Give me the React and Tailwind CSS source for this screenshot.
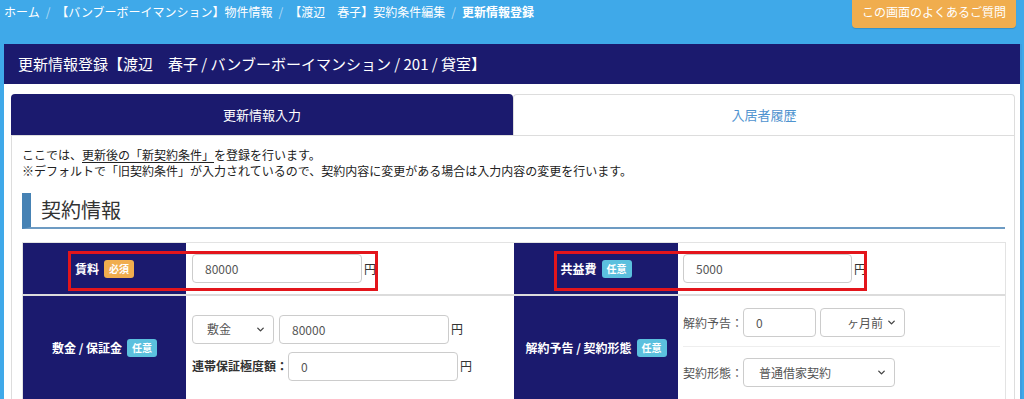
import React from 'react'
import { ChevronDown } from 'lucide-react'

const jp = { fontFamily: '"Noto Sans CJK JP", "Noto Sans", sans-serif' }

// ─── small parts ─────────────────────────────────────────────────────────────
function Badge({ kind }) {
  const req = kind === 'req'
  return (
    <span
      className={`ml-[5px] inline-flex items-center h-[18px] px-[5px] rounded-[3px] text-[10px] font-bold text-white ${
        req ? 'bg-[#f0ad4e]' : 'bg-[#5bc0de]'
      }`}
    >
      {req ? '必須' : '任意'}
    </span>
  )
}

function TextInput({ value, w }) {
  return (
    <input
      readOnly
      value={value}
      style={{ ...jp, width: w }}
      className="h-[29px] border border-[#cccccc] rounded-[4px] pl-[12px] text-[12px] text-[#555] bg-white outline-none"
    />
  )
}

function FakeSelect({ label, w, pl = 14 }) {
  return (
    <div
      style={{ width: w, paddingLeft: pl }}
      className="h-[29px] border border-[#cccccc] rounded-[4px] flex items-center justify-between pr-[7px] text-[12px] text-[#555] bg-white"
    >
      <span>{label}</span>
      <ChevronDown className="w-[11px] h-[11px] text-[#444]" strokeWidth={3} />
    </div>
  )
}

function Yen() {
  return <span className="ml-[2px] text-[12px] text-[#333]">円</span>
}

function LabelCell({ children }) {
  return (
    <div className="bg-[#1b1a6e] flex items-center justify-center text-white text-[12px] font-bold">
      {children}
    </div>
  )
}

// ─── App ─────────────────────────────────────────────────────────────────────
export default function App() {
  return (
    <div className="min-h-[399px] bg-[#3fa9e9] overflow-hidden" style={jp}>
      {/* Breadcrumb + FAQ */}
      <div className="flex justify-between items-start h-[44px]">
        <nav className="flex items-center pl-[4px] pt-[3px] text-[12px] text-white">
          <span>ホーム</span>
          <span className="px-[6px] text-white/60">/</span>
          <span>【バンブーボーイマンション】物件情報</span>
          <span className="px-[6px] text-white/60">/</span>
          <span>【渡辺　春子】契約条件編集</span>
          <span className="px-[6px] text-white/60">/</span>
          <span className="font-bold">更新情報登録</span>
        </nav>
        <button className="mr-[8px] -mt-[4px] h-[32px] w-[164px] rounded-[4px] bg-[#f0ad4e] text-white text-[12px] shadow-[0_1px_1px_rgba(0,0,0,0.15)]">
          この画面のよくあるご質問
        </button>
      </div>

      {/* Panel */}
      <div className="ml-[4px] mr-[2px] bg-white border-r-2 border-[#3f9de0] min-h-[355px]">
        <div className="h-[40px] bg-[#1b1a6e] flex items-center pl-[14px] text-white text-[15px]">
          更新情報登録【渡辺　春子 / バンブーボーイマンション / 201 / 貸室】
        </div>

        <div className="pl-[7px] pr-[5px] pt-[10px]">
          {/* Tabs */}
          <div className="flex h-[41px]">
            <div className="w-[502px] bg-[#1b1a6e] rounded-t-[4px] flex items-center justify-center text-white text-[13px]">
              更新情報入力
            </div>
            <div className="flex-1 border border-b-0 border-[#dddddd] rounded-t-[4px] flex items-center justify-center text-[#4f93cf] text-[13px]">
              入居者履歴
            </div>
          </div>

          {/* Tab body */}
          <div className="border-l border-r border-t border-[#dddddd] pl-[10px] pr-[9px] pt-[11px] min-h-[270px]">
            <p className="text-[12px] leading-[16px] text-[#222]">
              ここでは、<span className="underline underline-offset-2">更新後の「新契約条件」</span>を登録を行います。
            </p>
            <p className="text-[12px] leading-[16px] text-[#222]">
              ※デフォルトで「旧契約条件」が入力されているので、契約内容に変更がある場合は入力内容の変更を行います。
            </p>

            {/* Section title */}
            <div className="mt-[14px] h-[36px] flex items-center border-l-[9px] border-[#4682b4] border-b-2 border-b-[#6d9bc3] pl-[10px] text-[20px] text-[#333]">
              契約情報
            </div>

            {/* Table */}
            <div className="relative mt-[13px] w-[984px] border border-[#e3e3e3]">
              <div className="grid grid-cols-[163px_328px_164px_328px] h-[53px] border-b-2 border-[#dcdcdc]">
                <LabelCell>賃料<Badge kind="req" /></LabelCell>
                <div className="flex items-center pl-[6px]">
                  <TextInput value="80000" w={170} />
                  <Yen />
                </div>
                <LabelCell>共益費<Badge kind="opt" /></LabelCell>
                <div className="flex items-center pl-[5px]">
                  <TextInput value="5000" w={169} />
                  <Yen />
                </div>
              </div>

              <div className="grid grid-cols-[163px_328px_164px_328px] h-[103px]">
                <LabelCell>敷金 / 保証金<Badge kind="opt" /></LabelCell>
                <div className="flex flex-col justify-center pl-[6px] gap-[8px]">
                  <div className="flex items-center">
                    <FakeSelect label="敷金" w={82} />
                    <span className="w-[5px]" />
                    <TextInput value="80000" w={170} />
                    <Yen />
                  </div>
                  <div className="flex items-center">
                    <span className="text-[12px] font-bold text-[#333]">連帯保証極度額：</span>
                    <TextInput value="0" w={170} />
                    <Yen />
                  </div>
                </div>
                <LabelCell>解約予告 / 契約形態<Badge kind="opt" /></LabelCell>
                <div className="flex flex-col pl-[5px] pr-[6px] pt-[12px]">
                  <div className="flex items-center pb-[9px] border-b border-[#eeeeee]">
                    <span className="text-[12px] text-[#555] w-[60px]">解約予告：</span>
                    <TextInput value="0" w={73} />
                    <span className="w-[4px]" />
                    <FakeSelect label="ヶ月前" w={85} pl={26} />
                  </div>
                  <div className="flex items-center pt-[11px]">
                    <span className="text-[12px] text-[#555] w-[60px]">契約形態：</span>
                    <FakeSelect label="普通借家契約" w={152} pl={15} />
                  </div>
                </div>
              </div>

              {/* Red annotation boxes */}
              <div className="absolute left-[45px] top-[8px] w-[310px] h-[40px] border-[3px] border-[#e3151b] pointer-events-none" />
              <div className="absolute left-[531px] top-[8px] w-[313px] h-[40px] border-[3px] border-[#e3151b] pointer-events-none" />
            </div>
          </div>
        </div>
      </div>
    </div>
  )
}
